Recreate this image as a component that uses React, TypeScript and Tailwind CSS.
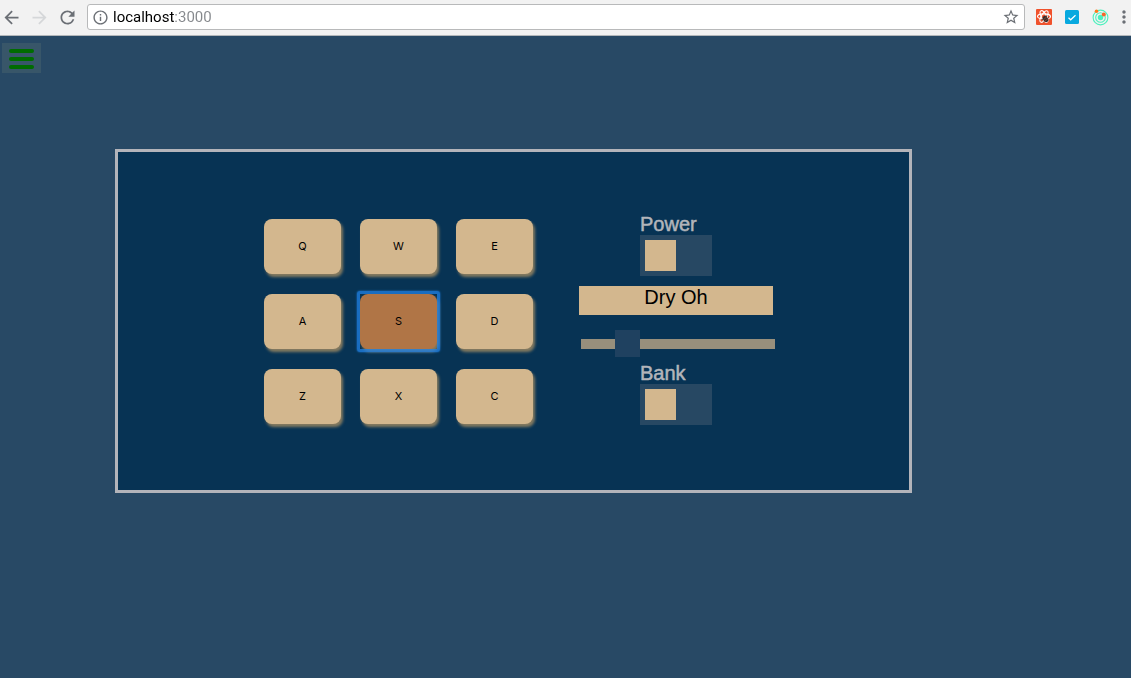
import { useState } from 'react';
import { MdArrowBack, MdArrowForward, MdInfoOutline, MdMoreVert, MdRefresh, MdStarBorder } from 'react-icons/md';

const pads = ['Q', 'W', 'E', 'A', 'S', 'D', 'Z', 'X', 'C'];

function BrowserBar() {
  return (
    <header className="flex h-9 items-center border-b border-[#b3b7ba] bg-[#f2f2f2] pb-px pl-px font-[Roboto,sans-serif] text-[#6b6f75]">
      <button aria-label="Back" className="w-7"><MdArrowBack size={21} /></button>
      <button aria-label="Forward" className="w-7 text-[#d5d7d9]"><MdArrowForward size={21} /></button>
      <button aria-label="Reload" className="w-[30px]"><MdRefresh size={21} /></button>
      <div className="flex h-[26px] flex-1 items-center rounded-[3px] border border-[#b8b9ba] bg-white px-1">
        <MdInfoOutline size={17} className="shrink-0" />
        <input
          aria-label="Address"
          defaultValue="localhost:3000"
          className="ml-1 h-5 min-w-0 flex-1 bg-[linear-gradient(to_right,#000_61px,#85888c_61px)] bg-clip-text text-[15px] text-transparent outline-none"
        />
        <button aria-label="Bookmark"><MdStarBorder size={18} /></button>
      </div>
      <div className="ml-[11px] flex items-center gap-3">
        <button aria-label="React tools">
          <svg width="16" height="16" viewBox="0 0 16 16">
            <rect width="16" height="16" rx="1" fill="#f0522c" />
            <g fill="none" stroke="#fff" strokeWidth="1.1">
              <ellipse cx="8" cy="7.5" rx="6.5" ry="2.6" />
              <ellipse cx="8" cy="7.5" rx="6.5" ry="2.6" transform="rotate(60 8 7.5)" />
              <ellipse cx="8" cy="7.5" rx="6.5" ry="2.6" transform="rotate(120 8 7.5)" />
            </g>
            <g transform="rotate(-40 9.5 10)">
              <ellipse cx="9.5" cy="10" rx="2.4" ry="3.4" fill="#34302e" />
              <path d="M7 9.2h5M7 11.3h5" stroke="#b8482e" strokeWidth=".6" />
              <path d="M6 8l1.5 1M6 11h1.5M11.5 9L13 8M11.5 11H13" stroke="#34302e" strokeWidth=".8" />
            </g>
          </svg>
        </button>
        <button aria-label="Tasks" className="flex w-4 justify-center">
          <svg width="14" height="14" viewBox="0 0 14 14">
            <rect width="14" height="14" rx="1.5" fill="#08a9df" />
            <path d="M3.5 7.7l2.2 2.1 4.8-4.5" fill="none" stroke="#fff" strokeWidth="1.2" />
          </svg>
        </button>
        <button aria-label="Orbit">
          <svg width="17" height="17" viewBox="0 0 17 17">
            <g fill="none" stroke="#4df0bd">
              <circle cx="8.5" cy="8.5" r="7.4" strokeWidth="1.1" />
              <circle cx="8.5" cy="8.5" r="4.8" strokeWidth="1.1" />
            </g>
            <circle cx="8.5" cy="8.5" r="2.7" fill="#4df0bd" />
            <circle cx="4.5" cy="2.2" r="1.8" fill="#ff7a1c" />
            <circle cx="11.8" cy="5.5" r="2" fill="#f4662a" />
          </svg>
        </button>
      </div>
      <button aria-label="More" className="ml-[5px] w-[17px]"><MdMoreVert size={20} /></button>
    </header>
  );
}

function Toggle({ id, label }: { id: string; label: string }) {
  const [right, setRight] = useState(false);
  return (
    <div className="flex w-[72px] flex-col">
      <label htmlFor={id} className="text-[20px] leading-[22px] text-[#b3b5ba] [-webkit-text-stroke:0.5px_#b3b5ba]">{label}</label>
      <button
        id={id}
        role="switch"
        aria-checked={right}
        onClick={() => setRight(!right)}
        className={`flex h-[41px] bg-[#274863] p-[5px] ${right ? 'justify-end' : 'justify-start'}`}
      >
        <span className="size-[31px] bg-[#d3b78e]" />
      </button>
    </div>
  );
}

export default function App() {
  const [active, setActive] = useState('S');
  return (
    <div className="flex min-h-screen flex-col bg-[#284965] font-['Liberation_Sans',Arial,sans-serif] text-black">
      <BrowserBar />
      <nav className="px-0.5 pt-[7px]">
        <button aria-label="Menu" className="flex h-[30px] w-[39px] flex-col items-center justify-center gap-1 bg-[#385669] pt-0.5">
          <span className="h-1 w-[25px] rounded-full bg-[#006c00]" />
          <span className="h-1 w-[25px] rounded-full bg-[#006c00]" />
          <span className="h-1 w-[25px] rounded-full bg-[#006c00]" />
        </button>
      </nav>
      <main className="mt-[76px] mr-[219px] ml-[115px] flex items-start justify-center border-3 border-[#b3b4ba] bg-[#073354] pt-[61px] pb-[65px]">
        <section aria-label="Drum pads" className="mt-1.5 mr-[46px] ml-2.5 grid grid-cols-3 gap-x-[19px] gap-y-5">
          {pads.map((pad) => (
            <button
              key={pad}
              onClick={() => setActive(pad)}
              className={`relative h-[55px] w-[77px] rounded-[8px] font-[Inter,sans-serif] text-[11px] shadow-[2px_3px_3px_#857b60] outline-none ${pad === active ? 'bg-[#b07546]' : 'bg-[#d3b78e]'}`}
            >
              {pad}
              {pad === active && (
                <span className="absolute -inset-[3px] rounded-[3px] border-3 border-[#2082e6]/75 shadow-[0_0_2px_#2082e6]" />
              )}
            </button>
          ))}
        </section>
        <section aria-label="Controls" className="flex w-[194px] flex-col items-center">
          <Toggle id="power" label="Power" />
          <output className="mt-2.5 h-[29px] w-full bg-[#d3b78e] text-center text-[20px] leading-[22px]">Dry Oh</output>
          <input
            type="range"
            aria-label="Volume"
            defaultValue={20}
            className="mt-[15px] mb-[5px] ml-1 h-[27px] w-full appearance-none bg-transparent outline-none [&::-webkit-slider-runnable-track]:h-2.5 [&::-webkit-slider-runnable-track]:bg-[#978f7c] [&::-webkit-slider-thumb]:-mt-[9px] [&::-webkit-slider-thumb]:h-[27px] [&::-webkit-slider-thumb]:w-[25px] [&::-webkit-slider-thumb]:appearance-none [&::-webkit-slider-thumb]:bg-[#1f4160]"
          />
          <Toggle id="bank" label="Bank" />
        </section>
      </main>
    </div>
  );
}
